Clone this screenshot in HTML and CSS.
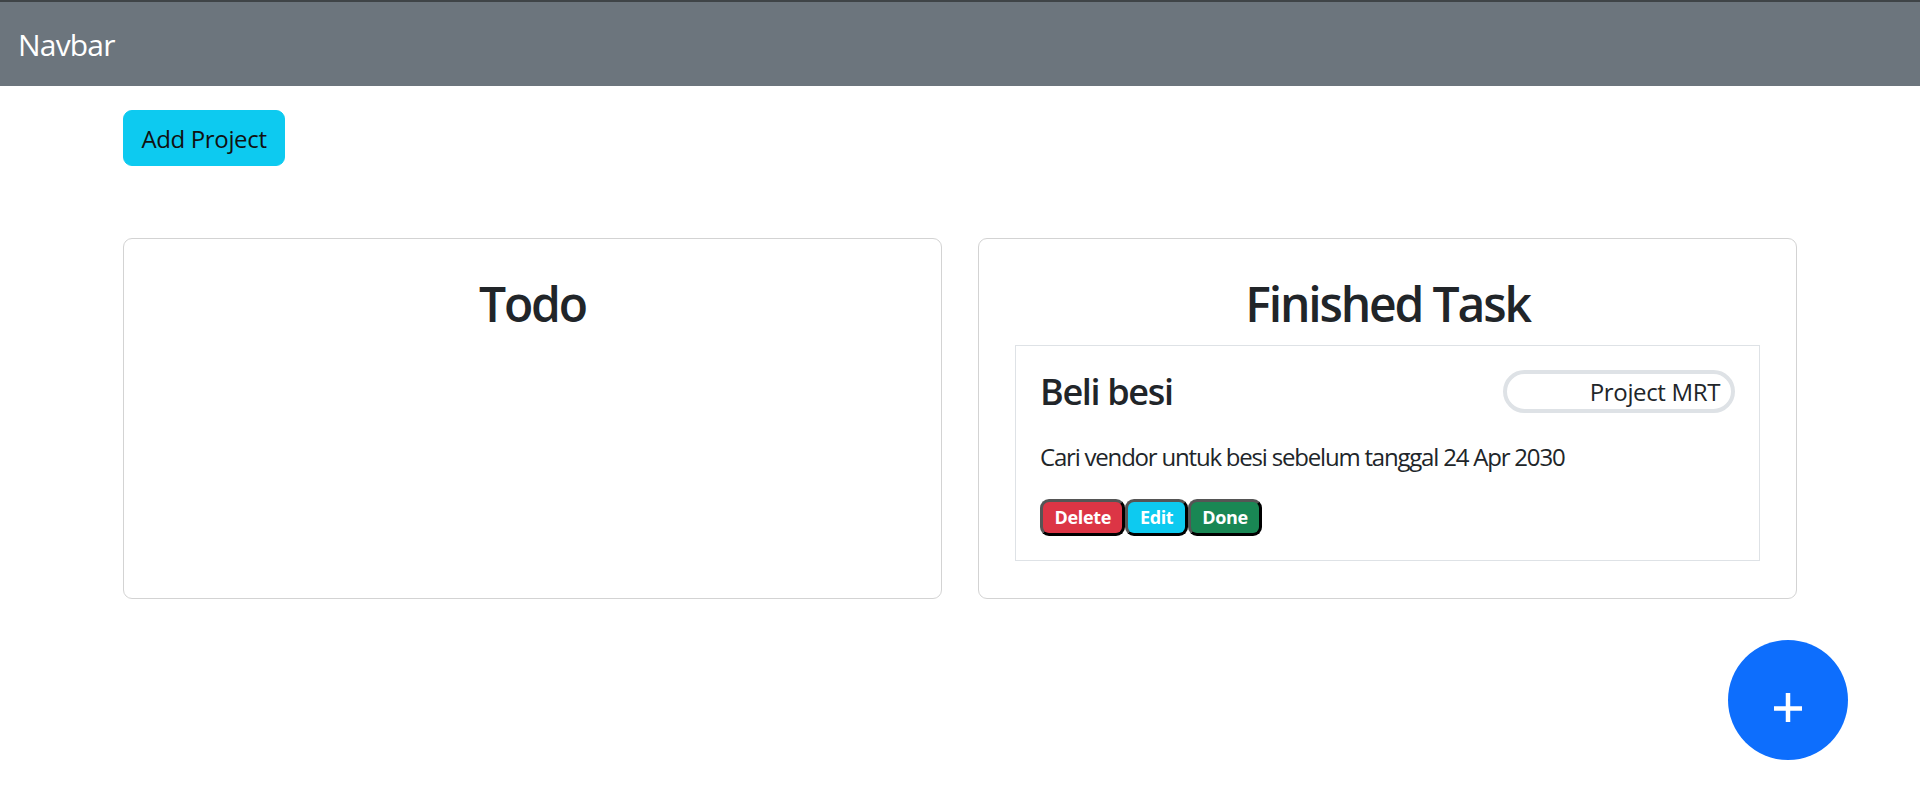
FILE: index.html
```html
<!DOCTYPE html>
<html lang="id">
<head>
<meta charset="utf-8">
<title>Todo</title>
<link rel="stylesheet" href="styles.css">
</head>
<body>
<nav class="navbar"><span class="brand">Navbar</span></nav>
<main class="container">
  <button class="btn-add">Add Project</button>
  <div class="board">
    <section class="panel">
      <h2 class="panel-title">Todo</h2>
    </section>
    <section class="panel">
      <h2 class="panel-title">Finished Task</h2>
      <article class="task">
        <div class="task-head">
          <h4 class="task-title">Beli besi</h4>
          <span class="project-pill">Project MRT</span>
        </div>
        <p class="task-desc">Cari vendor untuk besi sebelum tanggal 24 Apr 2030</p>
        <div class="actions">
          <button class="act act-delete">Delete</button>
          <button class="act act-edit">Edit</button>
          <button class="act act-done">Done</button>
        </div>
      </article>
    </section>
  </div>
</main>
<button class="fab" aria-label="Add">
  <svg width="120" height="120" viewBox="0 0 120 120"><path d="M46 68.5H74M60 53V82" stroke="#fff" stroke-width="4.5" fill="none"/></svg>
</button>
</body>
</html>
```
FILE: styles.css
```css
* { box-sizing: border-box; }
body {
  margin: 0;
  font-family: "Open Sans", "Noto Sans", sans-serif;
  letter-spacing: -0.022em;
  color: #212529;
  background: #fff;
}
.navbar {
  height: 86px;
  border-top: 2px solid #3f4447;
  background: #6c757d;
  padding: 0 18px;
  display: flex;
  align-items: center;
}
.brand {
  color: #fff;
  font-size: 30px;
  line-height: 45px;
  letter-spacing: -0.027em;
}
.container {
  width: 1674px;
  margin: 0 auto;
  padding-top: 24px;
}
.btn-add {
  font-family: inherit;
  letter-spacing: inherit;
  width: 162px;
  height: 56px;
  padding: 0;
  font-size: 24px;
  color: #111;
  background: #0dcaf0;
  border: 1.5px solid #0dcaf0;
  border-radius: 9px;
}
.board {
  margin-top: 72px;
  display: grid;
  grid-template-columns: 1fr 1fr;
  gap: 36px;
}
.panel {
  border: 1px solid #d3d3d3;
  border-radius: 9px;
  padding: 36px 36px 37px;
}
.panel-title {
  margin: 0 0 12px;
  font-size: 48px;
  line-height: 1.2;
  font-weight: 600;
  letter-spacing: -0.045em;
  text-align: center;
}
.task {
  border: 1px solid #dee2e6;
  padding: 24px;
}
.task-head {
  display: flex;
  justify-content: space-between;
  align-items: center;
  margin-bottom: 26px;
}
.task-title {
  margin: 0;
  font-size: 36px;
  line-height: 1.2;
  font-weight: 600;
  letter-spacing: -0.037em;
}
.project-pill {
  width: 232px;
  height: 43px;
  border: 4px solid #dee2e6;
  border-radius: 999px;
  text-align: right;
  padding-right: 11px;
  font-size: 24px;
  line-height: 35px;
}
.task-desc {
  margin: 0 0 24px;
  font-size: 24px;
  line-height: 36px;
  letter-spacing: -0.05em;
}
.actions {
  display: flex;
  gap: 0;
}
.act {
  font-family: inherit;
  letter-spacing: inherit;
  height: 37px;
  font-size: 18px;
  font-weight: 700;
  line-height: 1;
  color: #fff;
  padding: 0 11.5px;
  border: 3px solid;
  border-color: #555 #000 #000 #555;
  border-radius: 9px;
}
.act-delete { background: #dc3545; }
.act-edit { background: #0dcaf0; }
.act-done { background: #198754; }
.fab {
  position: fixed;
  right: 72px;
  bottom: 42px;
  width: 120px;
  height: 120px;
  padding: 0;
  border: none;
  border-radius: 50%;
  background: #0d6efd;
  display: block;
}
.fab svg { display: block; }
```
